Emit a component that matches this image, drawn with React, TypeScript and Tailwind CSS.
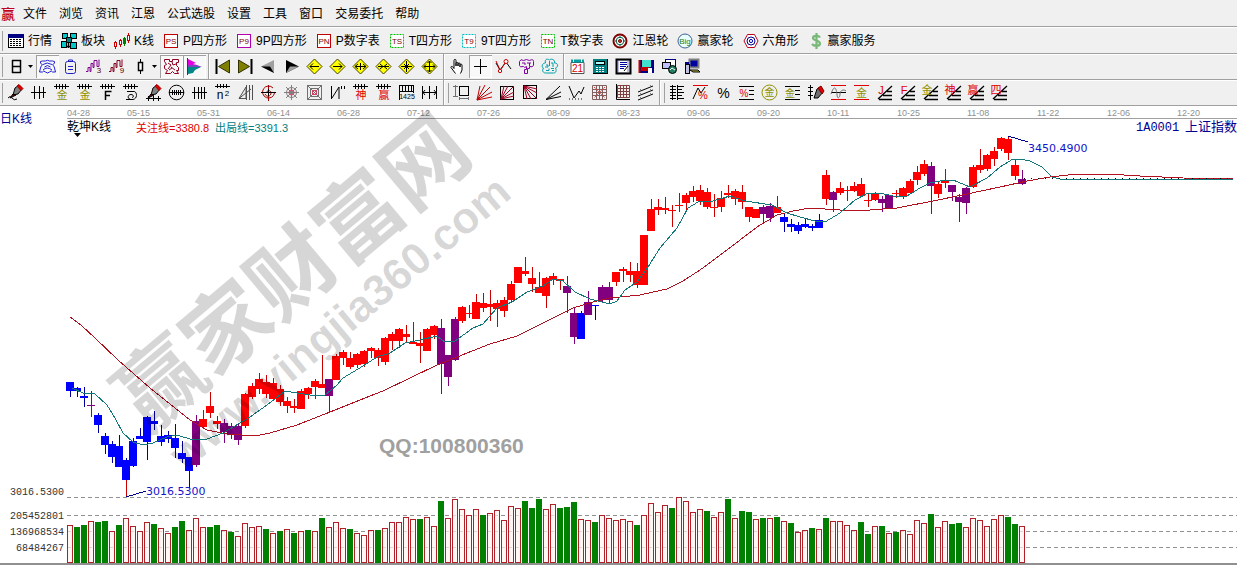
import type { ReactNode } from 'react';

type Tone = 'r' | 'p' | 'b';
// tone, high, low, body top, body bottom
type Candle = [Tone, number, number, number, number];

const TONES = { r: '#ff0000', p: '#800080', b: '#0000ff' };
const WICKS = { r: '#c80000', p: '#800080', b: '#0000a0' };

const candles: Candle[] = [
  ['b', 382, 397, 382, 391], ['b', 387, 397, 388, 391], ['b', 387, 407, 396, 398], ['p', 391, 417, 405, 406],
  ['b', 413, 433, 415, 425], ['b', 433, 454, 436, 445], ['b', 441, 463, 444, 457], ['b', 435, 467, 446, 467],
  ['b', 458, 480, 460, 480], ['b', 438, 467, 441, 466], ['b', 428, 439, 436, 439], ['b', 416, 460, 417, 442],
  ['b', 411, 430, 421, 424], ['b', 425, 446, 436, 442], ['b', 431, 443, 435, 439], ['b', 424, 458, 438, 448],
  ['b', 441, 463, 453, 459], ['b', 457, 488, 457, 471], ['p', 415, 467, 421, 465], ['r', 410, 428, 419, 427],
  ['r', 392, 418, 406, 413], ['r', 416, 429, 421, 424], ['p', 419, 443, 423, 432], ['p', 423, 439, 426, 435],
  ['p', 423, 445, 426, 440], ['r', 393, 428, 394, 426], ['r', 383, 399, 386, 397], ['r', 373, 394, 379, 389],
  ['r', 375, 398, 382, 394], ['r', 378, 400, 383, 399], ['r', 385, 406, 389, 402], ['r', 397, 413, 401, 406],
  ['r', 399, 413, 406, 408], ['r', 389, 409, 391, 409], ['r', 387, 399, 388, 394], ['r', 379, 399, 381, 387],
  ['r', 355, 388, 384, 388], ['p', 379, 413, 379, 396], ['r', 354, 380, 356, 380], ['r', 350, 365, 352, 358],
  ['r', 352, 369, 358, 367], ['r', 353, 368, 354, 365], ['r', 350, 367, 351, 364], ['r', 347, 358, 348, 351],
  ['r', 348, 366, 350, 358], ['r', 337, 365, 338, 362], ['r', 332, 350, 334, 341], ['r', 328, 348, 329, 341],
  ['r', 325, 342, 334, 337], ['r', 322, 343, 342, 344], ['r', 332, 363, 343, 346], ['r', 328, 351, 329, 351],
  ['r', 325, 339, 326, 335], ['p', 319, 394, 328, 364], ['p', 355, 386, 355, 377], ['p', 317, 361, 319, 360],
  ['r', 306, 323, 307, 321], ['r', 305, 318, 313, 314], ['r', 294, 319, 302, 319], ['r', 293, 312, 303, 308],
  ['r', 290, 321, 304, 307], ['r', 300, 327, 303, 309], ['r', 297, 317, 300, 311], ['r', 281, 302, 284, 300],
  ['r', 267, 283, 267, 283], ['r', 257, 276, 271, 274], ['r', 267, 292, 278, 284], ['r', 272, 293, 287, 293],
  ['r', 277, 308, 278, 296], ['r', 273, 285, 276, 280], ['r', 279, 290, 279, 281], ['p', 276, 313, 286, 293],
  ['p', 307, 344, 313, 337], ['b', 311, 339, 313, 339], ['p', 291, 315, 302, 315], ['b', 305, 320, 305, 306],
  ['p', 285, 302, 287, 300], ['p', 282, 304, 287, 300], ['r', 272, 286, 272, 282], ['r', 267, 282, 269, 271],
  ['r', 262, 282, 271, 275], ['r', 263, 288, 271, 285], ['r', 235, 285, 235, 285], ['r', 199, 231, 209, 231],
  ['r', 199, 215, 207, 210], ['r', 197, 214, 208, 210], ['r', 205, 227, 210, 211], ['r', 193, 212, 205, 206],
  ['r', 193, 211, 195, 203], ['r', 186, 202, 191, 197], ['r', 185, 205, 190, 201], ['r', 188, 209, 192, 207],
  ['r', 194, 217, 207, 208], ['r', 191, 212, 198, 207], ['r', 185, 198, 193, 195], ['r', 189, 205, 191, 199],
  ['r', 185, 209, 192, 202], ['r', 207, 222, 207, 217], ['r', 209, 218, 209, 218], ['p', 205, 223, 207, 214],
  ['p', 203, 222, 206, 218], ['r', 196, 213, 207, 213], ['b', 213, 232, 217, 222], ['b', 219, 232, 224, 227],
  ['b', 222, 234, 225, 231], ['b', 219, 228, 224, 227], ['b', 224, 231, 226, 228], ['b', 214, 228, 220, 228],
  ['r', 170, 205, 175, 199], ['p', 191, 212, 192, 200], ['r', 182, 195, 188, 193], ['r', 186, 201, 190, 191],
  ['r', 182, 192, 186, 191], ['r', 178, 197, 184, 196], ['r', 194, 207, 200, 201], ['r', 192, 201, 193, 200],
  ['p', 196, 212, 199, 203], ['p', 195, 209, 195, 209], ['r', 190, 198, 193, 194], ['r', 187, 199, 188, 197],
  ['r', 179, 194, 181, 193], ['r', 166, 185, 172, 180], ['r', 160, 176, 164, 174], ['p', 162, 214, 166, 186],
  ['r', 181, 198, 184, 194], ['r', 169, 188, 181, 183], ['p', 185, 201, 185, 192], ['p', 194, 222, 197, 202],
  ['p', 187, 214, 188, 203], ['r', 165, 188, 167, 187], ['r', 149, 173, 165, 170], ['r', 154, 171, 155, 169],
  ['r', 147, 166, 151, 159], ['r', 137, 151, 138, 149], ['r', 137, 160, 139, 153], ['r', 159, 180, 165, 176],
  ['p', 170, 185, 179, 184],
];

// Top edge of every volume bar; a negative number is a falling day.
const volumes = [
  525, -527, -525, 521, -522, -521, 531, -525, 518, 526, 531, 522, -524, 528, 533, -527, -521, 530, 518, 527,
  -527, -525, 530, -532, 536, 523, 527, 526, -529, 533, -531, 529, -533, 531, -530, 531, -518, 527, 522, 528,
  -529, 533, 535, 530, -530, 528, 522, 522, 517, 519, -519, 517, 526, -501, 518, 499, 509, 515, 509, -515,
  513, 510, 520, 506, 508, -501, -508, -499, 509, 504, -508, -507, -502, 519, 520, -522, 515, 518, 520, 519,
  521, -525, 515, 503, 512, 505, -508, 497, 501, 512, 509, -511, 517, 512, -499, 518, -511, -512, 519, -518,
  518, -517, 521, -523, 532, 530, -528, 529, -518, 521, 521, 525, 530, -522, -534, 526, -526, 533, -532, 530,
  534, 520, 523, -514, 527, 521, -524, -523, 527, 518, 520, 526, 519, 515, -517, -524, 526,
];

const slowLine =
  '70,317 81,325 95,338 118,360 150,388 190,420 207,430 227,434 242,435 260,435 270,433 297,425 330,412 370,396 383,391 410,378 437,365 455,358 467,353 490,344 517,336 543,323 573,308 593,302 610,298 640,295 667,289 683,281 700,270 727,250 757,227 777,215 793,211 810,208 840,210 870,210 897,208 933,201 967,194 1000,187 1027,181 1050,177 1077,174 1107,174 1140,176 1183,178 1233,179';
const fastLine =
  '72,388 83,393 95,394 107,405 115,418 123,433 133,442 143,445 153,443 167,437 177,435 193,440 207,439 223,433 240,423 250,417 267,405 285,391 297,393 310,395 325,395 337,385 343,378 363,366 377,357 390,353 405,343 420,340 437,336 445,342 455,341 473,328 483,324 497,308 512,302 527,292 543,286 553,279 563,281 575,292 590,299 610,304 617,301 625,290 637,282 648,267 660,248 677,228 688,208 698,202 713,201 730,196 745,201 772,205 787,213 800,217 815,221 825,222 840,213 855,200 868,193 880,193 893,196 907,196 920,188 930,183 940,181 953,180 970,187 987,178 1000,167 1013,159 1020,159 1030,161 1042,167 1052,177 1060,179 1233,179';

const dates = [
  ['04-28', 67], ['05-15', 127], ['05-31', 197], ['06-14', 267], ['06-28', 337], ['07-12', 407], ['07-26', 477],
  ['08-09', 547], ['08-23', 617], ['09-06', 687], ['09-20', 757], ['10-11', 827], ['10-25', 897], ['11-08', 967],
  ['11-22', 1037], ['12-06', 1107], ['12-20', 1177],
] as const;

const gridLines = [
  { y: 497, label: '3016.5300', labelY: 495 },
  { y: 515, label: '205452801', labelY: 519 },
  { y: 531, label: '136968534', labelY: 535 },
  { y: 547, label: '68484267', labelY: 551 },
];

const SANS = '"Liberation Sans", "Noto Sans CJK SC", sans-serif';
const MONO = '"Liberation Mono", "Noto Sans CJK SC", monospace';
const CJK = '"Noto Sans CJK SC", sans-serif';

function Icon({ children, size = 17 }: { children: ReactNode; size?: number }) {
  return (
    <svg width={size} height={size} viewBox={`0 0 ${size} ${size}`} fill="none" stroke="#000" className="shrink-0 overflow-visible" aria-hidden="true">
      {children}
    </svg>
  );
}

function Glyph({ x, y, size, fill, children }: { x: number; y: number; size: number; fill: string; children: string }) {
  return (
    <text x={x} y={y} fontSize={size} fill={fill} stroke="none" textAnchor="middle" fontFamily={SANS}>
      {children}
    </text>
  );
}

const boxed = (text: string, border: string, dotted = false) => (
  <Icon size={16}>
    <rect x="1.5" y="1.5" width="13" height="13" fill="#fff" stroke={border} strokeDasharray={dotted ? '2 1' : undefined} />
    <Glyph x={8} y={11} size={8} fill="#800000">{text}</Glyph>
  </Icon>
);

const shortcuts = [
  {
    label: '行情',
    icon: (
      <Icon size={16}>
        <rect x="0.5" y="1.5" width="15" height="13" fill="#fff" />
        <path d="M0 3h16" stroke="#000080" strokeWidth="4" />
        <path d="M2 6.5h12M2 8.5h12M2 10.5h12M2 12.5h12" strokeDasharray="2 1" />
      </Icon>
    ),
  },
  {
    label: '板块',
    icon: (
      <Icon size={16}>
        <path d="M3 3l5 5M12 4l-3 4M3 11l4-3M12 12l-3-4M7.5 10v5M6 13.5h4" strokeWidth="1.5" />
        <g fill="#00c8c8">
          <rect x="1.5" y="0.5" width="5" height="5" />
          <rect x="9.500" y="0.5" width="6" height="5" />
          <rect x="0.5" y="8.5" width="5" height="6" />
          <rect x="9.5" y="9.5" width="6" height="6" />
        </g>
        <rect x="5.5" y="4.5" width="5" height="5" fill="#008080" />
      </Icon>
    ),
  },
  {
    label: 'K线',
    icon: (
      <Icon size={16}>
        <path d="M10.500 4v9" stroke="#008000" />
        <path d="M1.500 8v8M6.500 6v8M14.500 0v10" stroke="#d00000" />
        <rect x="0.5" y="9.5" width="2" height="4" fill="#fff" stroke="#d00000" />
        <rect x="5.5" y="7.5" width="2" height="4" fill="#fff" stroke="#d00000" />
        <rect x="9.5" y="5.5" width="2" height="5" fill="#008000" stroke="#008000" />
        <rect x="13.5" y="2.5" width="2" height="5" fill="#fff" stroke="#d00000" />
      </Icon>
    ),
  },
  { label: 'P四方形', icon: boxed('PS', '#c00000') },
  { label: '9P四方形', icon: boxed('P9', '#b000b0') },
  { label: 'P数字表', icon: boxed('PN', '#c00000') },
  { label: 'T四方形', icon: boxed('TS', '#00c000', true) },
  { label: '9T四方形', icon: boxed('T9', '#00c0c0', true) },
  { label: 'T数字表', icon: boxed('TN', '#00c000', true) },
  {
    label: '江恩轮',
    icon: (
      <Icon size={16}>
        <circle cx="8" cy="8" r="6.5" fill="#fff" stroke="#800000" strokeWidth="2" />
        <circle cx="8" cy="8" r="3.8" stroke="#006040" />
        <circle cx="8" cy="8" r="1.5" fill="#c04040" stroke="#800000" />
        <path d="M8 3v2M8 11v2M3 8h2M11 8h2" stroke="#006040" />
      </Icon>
    ),
  },
  {
    label: '赢家轮',
    icon: (
      <Icon size={16}>
        <circle cx="8" cy="8" r="7" fill="#e8ffff" stroke="#406090" />
        <Glyph x={8} y={11} size={8} fill="#208020">Big</Glyph>
      </Icon>
    ),
  },
  {
    label: '六角形',
    icon: (
      <Icon size={16}>
        <path d="M4.5 1.5h7L15 8l-3.500 6.500h-7L1 8z" fill="#fff" stroke="#c00020" />
        <circle cx="8" cy="8" r="4" stroke="#000080" />
        <circle cx="8" cy="8" r="1.600" stroke="#0000c0" />
      </Icon>
    ),
  },
  {
    label: '赢家服务',
    icon: (
      <Icon size={16}>
        <path d="M12 4.500C11 2.500 5 2.200 5 5c0 3 7 2 7 5.500 0 3-6 3-8 .5M8.500 0v16" stroke="#78b878" strokeWidth="2.200" />
      </Icon>
    ),
  },
];

const menus = ['文件', '浏览', '资讯', '江恩', '公式选股', '设置', '工具', '窗口', '交易委托', '帮助'];

type Tool = { name: string; icon: ReactNode; active?: boolean };

const diamond = (arrows: string) => (
  <Icon>
    <path d="M8.500 1L16 8.500 8.500 16 1 8.500z" fill="#ffff00" stroke="#404000" />
    <path d={arrows} />
  </Icon>
);

const steps = (digit: string, color: string) => (
  <Icon>
    <path d="M1 13.500h2v-4h2v4h1v-8h2v4h1v-7h3v6h2v-7" stroke={color} />
    <Glyph x={14} y={15} size={8} fill="#600000">{digit}</Glyph>
  </Icon>
);

const viewTools: Tool[] = [
  { name: '叠加', active: true, icon: (
    <Icon><path d="M1.500 5q-1-2 2-2h3q2-1.500 4 0h3q3 0 2 2l-2 2q2 1 2 3l1 4h-3q-1-2-3 0-2 2-4 0-2-2-3 0h-3l1-4q0-2 2-3zM4 6.500q4-3 9 0M5.500 9q3-3 6 0M4 12q4-4 9 0" stroke="#2020d0" /></Icon>
  ) },
  { name: '列表', icon: (
    <Icon><rect x="3.500" y="3.500" width="10" height="12" rx="2" stroke="#2020c0" /><path d="M6.500 4v-2h4v2M6 8.500h5M6 11.500h5" stroke="#2020c0" /></Icon>
  ) },
  { name: '三段', icon: steps('3', '#800090') },
  { name: '九段', icon: steps('9', '#800020') },
];

const shapeStyleTools: Tool[] = [
  { name: '形态', active: true, icon: (
    <Icon><path d="M1.500 1.500h5v2h3v-2h6v3h-2v3l2 2v3h-2l2 3h-4l-2-2-2 2h-5l2-3-3-2v-3l2-1-2-3zM5 5l3 2-3 4M9 4l1 3 3-1M8 9l4 3M6 12l3-2" stroke="#900020" /></Icon>
  ) },
  { name: '筹码', active: true, icon: (
    <Icon><path d="M1.500 0v17" stroke="#c00000" /><path d="M2 1l8 4-3 1 4 1H2z" fill="#e000e0" stroke="none" /><path d="M2 7h9l5 2H2z" fill="#8040c0" stroke="none" /><path d="M2 9h13l-6 3-2 3-5 1z" fill="#008888" stroke="none" /></Icon>
  ) },
];

const jumpTools: Tool[] = [
  { name: '第一', icon: <Icon><path d="M2.500 1v15" strokeWidth="2" /><path d="M15.500 2v13L4.500 8.500z" fill="#808000" stroke="#303000" /></Icon> },
  { name: '最后', icon: <Icon><path d="M14.500 1v15" strokeWidth="2" /><path d="M1.500 2v13L12.500 8.500z" fill="#808000" stroke="#303000" /></Icon> },
  { name: '上一个', icon: <Icon><path d="M14 2v13L1 8.500z" fill="#a0a0a0" stroke="none" /><path d="M1 8.500h9l4 6.500z" fill="#000" stroke="none" /></Icon> },
  { name: '下一个', icon: <Icon><path d="M3 2v13L16 8.500z" fill="#000" stroke="none" /><path d="M3 15l4-6.500h9z" fill="#a0a0a0" stroke="none" /></Icon> },
  { name: '左移', icon: diamond('M4 8.500h9M7 5.500l-3 3 3 3') },
  { name: '右移', icon: diamond('M4 8.500h9M10 5.500l3 3-3 3') },
  { name: '展开', icon: diamond('M3 8.500h11M6 6l-3 2.500 3 2.500M11 6l3 2.500-3 2.500M8.500 5v7') },
  { name: '收缩', icon: diamond('M3 8.500h11M5 6l3 2.500-3 2.500M12 6l-3 2.500 3 2.500') },
  { name: '缩小', icon: diamond('M3 8.500h11M8.500 3v11M6 6l5 5M11 6l-5 5') },
  { name: '放大', icon: diamond('M3 8.500h11M8.500 3v11M6.500 5l2-2 2 2M6.500 12l2 2 2-2M5 6.500l-2 2 2 2M12 6.500l2 2-2 2') },
];

const pointerTools: Tool[] = [
  { name: '移动', icon: (
    <Icon><path d="M6.500 15.500L2 9.500c0-2 2-1 3 1v-8c0-1.500 2-1.500 2 0V8 5.500c0-1.500 2-1.500 2 0V8 6c0-1.500 2-1.500 2 0v3-2c0-1.500 2-1 2 0v5l-1.500 3.500" fill="#fff" /></Icon>
  ) },
  { name: '十字线', active: true, icon: <Icon><path d="M8.500 1v15M2 8.500h13" /></Icon> },
  { name: '连线', icon: (
    <Icon><path d="M1 5l4 7 6-8 5 7" /><path d="M1 3l4 9M10 5l-5 8" stroke="#d00000" /><circle cx="5" cy="13" r="1.700" fill="#fff" stroke="#d00000" /><circle cx="11" cy="3.500" r="2" fill="#fff" stroke="#d00000" /></Icon>
  ) },
  { name: '区间', icon: (
    <Icon><path d="M1.500 3.500q1-3 4-1 3-2 6 0 4-2 4 1v4q-1 2-4 1v2h-2v5h-3v-4h2v-3q-2 2-3 0-4 1-4-1zM4 5h3v2M9 5h4M11.500 5v3" stroke="#8000a0" /></Icon>
  ) },
  { name: '循环', icon: (
    <Icon><path d="M8.500 2c-3-2-5 0-4 3-4 0-4 5-2 5-2 3 0 5 2 5h8c3 0 3-3 2-5 3-1 3-5-1-5 1-3-3-5-5-3zM8.500 3v5M5 7h2v2H4M10 5h2v4M10 10.500h3M5 12.500h3v-2M11 12.500h2" stroke="#00a0a8" /></Icon>
  ) },
];

const pageTools: Tool[] = [
  { name: '日历', icon: (
    <Icon><path d="M2 4.500h13V15.500H2z" fill="#fff" stroke="#505050" /><path d="M2 3h13" stroke="#00a0a0" strokeWidth="3" /><path d="M4.500 1v3M12.500 1v3" stroke="#fff" /><Glyph x={8.5} y={14} size={10} fill="#e00000">21</Glyph></Icon>
  ) },
  { name: '计算器', icon: (
    <Icon><rect x="1" y="1" width="15" height="15" fill="#008080" stroke="none" /><path d="M15.500 1v15M1 15.500h15" /><rect x="3.500" y="3.500" width="9" height="3" fill="#b0ffff" /><path d="M4 9.500h9M4 11.500h9M4 13.500h9" stroke="#fff" strokeDasharray="2 1" /></Icon>
  ) },
  { name: '笔记', icon: (
    <Icon><rect x="1.500" y="1.500" width="14" height="14" fill="#c0c0e0" strokeWidth="2" /><rect x="4" y="3" width="8" height="11" fill="#fff" stroke="none" /><path d="M5 4.500h7M5 6.500h7M5 8.500h6M5 10.500h4" stroke="#0000a0" /><path d="M9 13l4-5" /></Icon>
  ) },
  { name: '保存', icon: (
    <Icon><rect x="1" y="2" width="15" height="13" fill="#000080" stroke="none" /><path d="M1.500 2v13" stroke="#c00000" strokeWidth="2" /><rect x="4" y="2" width="9" height="7" fill="#40e0d0" stroke="none" /><rect x="3" y="9" width="8" height="4" fill="#c00000" stroke="none" /><rect x="10" y="10" width="4" height="5" fill="#fff" stroke="none" /></Icon>
  ) },
  { name: '联网', icon: (
    <Icon><rect x="4.500" y="1.500" width="10" height="7" fill="#fff" stroke="#000080" /><rect x="1.500" y="4.500" width="8" height="6" fill="#c0c0ff" /><circle cx="11.500" cy="11.500" r="4" fill="#208060" /><path d="M9 12l2-2 3 2M4 12.500h3" stroke="#fff" /></Icon>
  ) },
  { name: '传输', icon: (
    <Icon><rect x="5.500" y="1.500" width="9" height="8" fill="#0000a0" stroke="#808080" strokeWidth="2" /><rect x="1.500" y="6.500" width="4" height="9" fill="#c0c0e0" /><path d="M6 12h8l2 2H9z" fill="#c0c040" /><path d="M1 5h4" stroke="#000080" strokeWidth="2" /></Icon>
  ) },
];

const COMB = 'M1 2.500h15M3.500 0v5M6.500 0v5M9.500 0v5M12.500 0v5';

const comb = (char: string, color: string) => (
  <Icon>
    <path d={COMB} />
    <Glyph x={9} y={15} size={11} fill={color}>{char}</Glyph>
  </Icon>
);

const brush = (extra: string) => (
  <Icon>
    <path d={extra} />
    <path d="M6 11l2-7 4-3 3 4-4 5z" fill="#808080" />
    <path d="M10 2l2-1.500 4 4-2 2z" fill="#e00000" stroke="#a00000" />
    <path d="M3 14l3-4 3 1z" fill="#800000" />
  </Icon>
);

const stepped = (char: string, color: string) => (
  <Icon>
    <path d="M2 15L16 2M11 7.500h5M7 11.500h9M3 15.500h13" strokeWidth="1.300" />
    <Glyph x={5} y={10} size={11} fill={color}>{char}</Glyph>
  </Icon>
);

const lineTools: Tool[] = [
  { name: '画笔', icon: brush('M1 14q2-3 4 0t5 1') },
  { name: '等分', icon: <Icon><path d="M1 8.500h15M4.500 2v13M9.500 2v13M13.500 3v11" /></Icon> },
  { name: '黄金分割', icon: comb('金', '#909000') },
  { name: '黄金周期', icon: comb('金', '#909000') },
  { name: '斐波那契', icon: <Icon><path d={COMB} /><path d="M6.500 16V7.500h6M6 11.500h5" strokeWidth="1.500" /></Icon> },
  { name: '螺旋', icon: <Icon><path d={COMB} /><path d="M5 7.500h7c3 0 4 7-1 8-6 1-6-5-2-5 3 0 3 3 1 3M4 15.500h5" /></Icon> },
  { name: '标尺画笔', icon: brush('M1 14.500h15M3.500 12v5M8.500 12v5M13.500 12v5') },
  { name: '圆周', icon: <Icon><circle cx="8.500" cy="8.500" r="7.300" /><path d="M1 8.500h15M4.500 6v5M6.500 6v5M8.500 6v5M10.500 6v5M12.500 6v5" /></Icon> },
  { name: '周期线', icon: <Icon><path d="M1 8.500h15M3.500 3v12M7.500 3v12M10.500 3v12M13.500 3v12" /></Icon> },
  { name: '平方', icon: <Icon><path d="M1 2.500h15M3.500 0v4M6.500 0v4M9.500 0v4M12.500 0v4" /><Glyph x={6} y={15} size={12} fill="#000">n</Glyph><Glyph x={13} y={12} size={8} fill="#000">2</Glyph></Icon> },
  { name: '三角', icon: <Icon><path d="M2 14.500L9 3v11.500zM9.500 1v15M2 14.500L14 5M12.500 1v15M15.500 1v15" stroke="#505050" /></Icon> },
  { name: '圆心', icon: <Icon><path d="M8.500 1v16M13 4A6 6 0 1 0 14.500 9M5 10c2 4 6 2 6-1 0-3-4-3-4-1" stroke="#a00000" /><path d="M1 8.500h15M8.500 5v7" /></Icon> },
  { name: '八方', icon: <Icon><path d="M1 8.500h15M8.500 1v15M3 3l11 11M14 3L3 14" stroke="#808080" /><circle cx="8.500" cy="8.500" r="5" stroke="#808080" /><circle cx="8.500" cy="8.500" r="2.500" stroke="#d04060" /></Icon> },
  { name: '方格', icon: <Icon><path d="M1.500 1.500h14v14h-14zM4.500 4.500h8v8h-8zM1 1l15 15M16 1L1 16" stroke="#707070" /><rect x="6.500" y="6.500" width="4" height="4" stroke="#d04060" /></Icon> },
  { name: '波动', icon: <Icon><path d="M2.500 2v13M3 14L10 3v12M12.500 2v3M15.500 2v3" /></Icon> },
  { name: '神奇', icon: comb('神', '#e00000') },
  { name: '赢家', icon: comb('赢', '#e00000') },
  { name: '刻度', icon: <Icon><path d="M1.500 1v15M15.500 1v8M1 1.500h15M1 7.500h15M4.500 1v6M7.500 1v6M10.500 1v6M13.500 1v6" /><Glyph x={9} y={15} size={7} fill="#000">1425</Glyph></Icon> },
  { name: '跨度', icon: <Icon><path d="M1.500 2v13M15.500 2v13M8.500 2v13M2 8.500h13M4 6L2 8.500 4 11M13 6l2 2.500-2 2.500" /></Icon> },
];

const shapeTools: Tool[] = [
  { name: '框选', icon: <Icon><path d="M2.500 1v12M0 2.500h5M0 12.500h5" stroke="#707070" /><rect x="6.500" y="2.500" width="9" height="9" /><path d="M6 14.500h10M6.500 13v3M15.500 13v3" stroke="#707070" /></Icon> },
  { name: '扇形', icon: <Icon><path d="M1 16L14 3M1 16L9 1M1 16L16 8M1 16L4 2M1 16l15-3" stroke="#c00000" /></Icon> },
  { name: '框扇', icon: <Icon><rect x="1.500" y="2.500" width="13" height="13" /><path d="M2 15L15 2M2 15L9 2M2 15l13-7M2 15L5 2M2 15l13-3" stroke="#a00020" /></Icon> },
  { name: '反扇', icon: <Icon><rect x="1.500" y="1.500" width="13" height="13" /><path d="M2 2l13 13M2 2l7 13M2 2l13 7M2 2l3 13M2 2l13 3" stroke="#a00020" /></Icon> },
  { name: '射线', icon: <Icon><path d="M1 15.500L15 2M1 15.500L16 8M1 15.500l15-3" /></Icon> },
  { name: '折线', icon: <Icon><path d="M1 2l5 12 5-7 2 3 3-7" /><path d="M1 15h15" strokeDasharray="1 2" /></Icon> },
  { name: '网格', icon: <Icon><path d="M1.500 1.500h14v14h-14zM1 5.500h15M1 8.500h15M1 11.500h15M5.500 1v15M8.500 1v15M11.500 1v15" stroke="#806060" /><path d="M3 3l11 11M14 3L3 14" stroke="#d04040" strokeDasharray="2 1" /></Icon> },
  { name: '坐标网格', icon: <Icon><path d="M3.500 1.500h12v12h-12zM3 4.500h12M3 7.500h12M3 10.500h12M6.500 2v12M9.500 2v12M12.500 2v12" stroke="#804040" /><path d="M2.500 0v15.500H16" /></Icon> },
  { name: '平行线', icon: <Icon><path d="M1 8l15-6M1 12l15-6M1 16l15-6" /><path d="M3.500 5v12M13.500 1v12" stroke="#808080" strokeDasharray="1 1" /></Icon> },
];

const statTools: Tool[] = [
  { name: '阶梯', icon: <Icon><path d="M3.500 1v15M8.500 1v15M1 2.500h6M1 5.500h6M1 8.500h6M1 11.500h6M1 14.500h6M9 2.500h6M9 5.500h4M9 8.500h6M9 11.500h4M9 14.500h6" /></Icon> },
  { name: '百分比线', icon: <Icon><path d="M1 1.500h15" stroke="#e00000" /><path d="M1 15l5-11 3 5 4-6" /><Glyph x={11} y={15} size={11} fill="#e00000">%</Glyph></Icon> },
  { name: '百分比', icon: <Icon><Glyph x={8.5} y={14} size={14} fill="#000">%</Glyph></Icon> },
  { name: '百分比刻度', icon: <Icon><path d="M1 2.500h15M11 6.500h5M11 10.500h5M1 15.500h15" /><Glyph x={6} y={13} size={10} fill="#e00000">%</Glyph></Icon> },
  { name: '金圆', icon: <Icon><circle cx="8.500" cy="8.500" r="7.500" stroke="#909000" /><Glyph x={8.5} y={12} size={10} fill="#909000">金</Glyph></Icon> },
  { name: '金刻度', icon: <Icon><path d="M1 2.500h15M11 6.500h5M11 10.500h5M1 15.500h15" /><Glyph x={6} y={13} size={10} fill="#909000">金</Glyph></Icon> },
  { name: '刻度画笔', icon: <Icon><path d="M3.500 1v15M1 3.500h5M1 7.500h5M1 11.500h5" /><path d="M7 14l3-9 4-2 2 5-5 6z" fill="#707070" /><path d="M11 4l3-2 3 5-2 3z" fill="#e00000" stroke="#800000" /></Icon> },
  { name: '通道', icon: <Icon><path d="M1 1.500h15M1 15.500h15" stroke="#e00000" /><path d="M1 8.500h15" /><path d="M1 10c3-9 5-7 6 0 0 6 3 4 3 0s4-5 6-3" stroke="#707070" /></Icon> },
  { name: '金通道', icon: <Icon><path d="M1 1.500h15M1 15.500h15" stroke="#e00000" /><Glyph x={8.5} y={13} size={11} fill="#909000">金</Glyph></Icon> },
  { name: 'J线', icon: stepped('J', '#e00000') },
  { name: 'F线', icon: stepped('F', '#e00000') },
  { name: '金线', icon: stepped('金', '#909000') },
  { name: '神线', icon: stepped('神', '#e00000') },
  { name: '赢线', icon: stepped('赢', '#e00000') },
  { name: '四线', icon: stepped('四', '#e00000') },
];

function ToolButton({ tool }: { tool: Tool }) {
  return (
    <button
      type="button"
      aria-label={tool.name}
      className={`flex h-[23px] w-[23px] shrink-0 items-center justify-center ${
        tool.active ? 'bg-[#f8f8f8] shadow-[inset_1px_1px_0_#a0a0a0,inset_-1px_-1px_0_#fff]' : ''
      }`}
    >
      {tool.icon}
    </button>
  );
}

function ToolGroup({ tools }: { tools: Tool[] }) {
  return (
    <div className="flex items-center">
      {tools.map((tool) => (
        <ToolButton key={tool.name} tool={tool} />
      ))}
    </div>
  );
}

function DropButton({ name, children }: { name: string; children: ReactNode }) {
  return (
    <button type="button" aria-label={name} className="flex h-[23px] w-8 shrink-0 items-center justify-center gap-[3px]">
      {children}
      <svg width="5" height="3" viewBox="0 0 5 3" aria-hidden="true">
        <path d="M0 0h5L2.500 3z" />
      </svg>
    </button>
  );
}

const Grip = () => <div className="mr-px ml-0.5 h-5 w-px shrink-0 bg-[#a0a0a0]" />;
const Divider = () => <div className="mx-[2px] h-[25px] w-px shrink-0 bg-[#a0a0a0] shadow-[1px_0_0_#fff]" />;

function Chart() {
  return (
    <svg viewBox="0 106 1237 457" className="block w-full bg-white" role="img" aria-label="上证指数 日K线">
      <g fontFamily={SANS} fontSize="9" fill="#909090">
        {dates.map(([text, x]) => (
          <text key={text} x={x} y="116">{text}</text>
        ))}
      </g>
      <path d="M67 118.500h1170" stroke="#a0a0a0" />

      <g stroke="#909090" strokeDasharray="4 3">
        {gridLines.map((g) => (
          <path key={g.y} d={`M67 ${g.y + 0.5}h1170`} />
        ))}
      </g>
      <g fontFamily={MONO} fontSize="10" fill="#333" textAnchor="end">
        {gridLines.map((g) => (
          <text key={g.y} x="64" y={g.labelY}>{g.label}</text>
        ))}
      </g>

      {/* volume */}
      <g shapeRendering="crispEdges">
        {volumes.map((v, i) => {
          const top = Math.abs(v);
          const x = 67 + i * 7;
          return v < 0 ? (
            <rect key={i} x={x} y={top} width="6" height={563 - top} fill="#008000" />
          ) : (
            <rect key={i} x={x + 0.5} y={top + 0.5} width="5" height={562 - top} fill="#fff4f0" fillOpacity="0.7" stroke="#b02028" />
          );
        })}
      </g>

      {/* candles */}
      <g shapeRendering="crispEdges">
        {candles.map(([tone, high, low, top, bottom], i) => {
          const x = 70 + i * 7;
          return (
            <g key={i}>
              <rect x={x} y={high} width="1" height={low - high} fill={WICKS[tone]} />
              <rect x={x - 4} y={top} width="8" height={bottom - top} fill={TONES[tone]} />
            </g>
          );
        })}
        <rect x="126" y="480" width="1" height="17" fill="#d00000" />
      </g>
      <g fill="none" shapeRendering="crispEdges">
        <polyline points={slowLine} stroke="#b01020" />
        <polyline points={fastLine} stroke="#107878" />
        <path d="M1024 178.500h210" stroke="#000" strokeDasharray="1 6" />
        <path d="M126 497l20-6M1008 136l20 6" stroke="#000090" />
      </g>

      <g fontFamily='"DejaVu Sans", sans-serif' fontSize="11" fill="#1414c8">
        <text x="146" y="495">3016.5300</text>
        <text x="1028" y="152">3450.4900</text>
      </g>

      <g fontFamily={SANS}>
        <text x="0" y="123" fontSize="12" fill="#000090">日K线</text>
        <text x="67" y="131" fontSize="12" fill="#000">乾坤K线</text>
        <text x="136" y="132" fontSize="11" fill="#e00000">关注线=3380.8</text>
        <text x="215" y="132" fontSize="11" fill="#008080">出局线=3391.3</text>
      </g>
      <path d="M74 133h7l-3.500 4z" />
      <g fill="#000090">
        <text x="1136" y="131" fontSize="12" fontFamily={MONO}>1A0001</text>
        <text x="1185" y="131" fontSize="13" fontFamily={CJK}>上证指数</text>
      </g>

      {/* watermark */}
      <g fill="#000" fillOpacity="0.16" fontWeight="700">
        <text transform="translate(312 296) rotate(-40)" textAnchor="middle" fontSize="86" fontFamily={CJK}>赢家财富网</text>
        <text transform="translate(185 472) rotate(-40)" fontSize="44" fontFamily={SANS}>www.yingjia360.com</text>
      </g>
      <text x="379" y="453" fontSize="21" fontWeight="700" fontFamily={SANS} fill="#a0a0a0">QQ:100800360</text>
    </svg>
  );
}

export default function App() {
  return (
    <div className='flex min-h-screen flex-col overflow-x-hidden bg-white font-["Liberation_Sans","Noto_Sans_CJK_SC",sans-serif] text-xs text-black'>
      <nav className="flex h-[27px] items-center border-b border-[#a0a0a0] bg-[#f0f0f0] pt-0.5">
        <div className="w-[23px] pl-px text-sm font-medium text-[#c00020]">赢</div>
        <div className="flex gap-3">
          {menus.map((menu) => (
            <button key={menu} type="button" className="whitespace-nowrap">{menu}</button>
          ))}
        </div>
      </nav>

      <div className="flex h-[27px] items-center border-b border-[#a0a0a0] bg-[#f0f0f0] pt-px shadow-[inset_0_1px_0_#fff]">
        <Grip />
        <div className="ml-1 flex gap-[9px]">
          {shortcuts.map((item) => (
            <button key={item.label} type="button" className="flex items-center gap-1 whitespace-nowrap">
              {item.icon}
              {item.label}
            </button>
          ))}
        </div>
      </div>

      <div className="flex h-[26px] items-center border-b border-[#a0a0a0] bg-[#f0f0f0] shadow-[inset_0_1px_0_#fff]">
        <Grip />
        <DropButton name="周期">
          <Icon><path d="M4 2.500h9M4 8.500h9M4 14.500h9M4.500 2v13M12.500 2v13" strokeWidth="1.500" /></Icon>
        </DropButton>
        <ToolGroup tools={viewTools} />
        <DropButton name="线型">
          <Icon><path d="M8.500 1v15" /><rect x="6.500" y="4.500" width="4" height="8" fill="#fff" strokeWidth="1.500" /></Icon>
        </DropButton>
        <ToolGroup tools={shapeStyleTools} />
        <Divider />
        <ToolGroup tools={jumpTools} />
        <Divider />
        <ToolGroup tools={pointerTools} />
        <Divider />
        <ToolGroup tools={pageTools} />
      </div>

      <div className="flex h-[26px] items-center border-b border-[#a0a0a0] bg-[#f0f0f0] shadow-[inset_0_1px_0_#fff]">
        <Grip />
        <ToolGroup tools={lineTools} />
        <Divider />
        <Grip />
        <ToolGroup tools={shapeTools} />
        <Divider />
        <Grip />
        <ToolGroup tools={statTools} />
      </div>

      <main>
        <Chart />
      </main>
      <div className="h-0.5 bg-[#909090]" />
    </div>
  );
}
